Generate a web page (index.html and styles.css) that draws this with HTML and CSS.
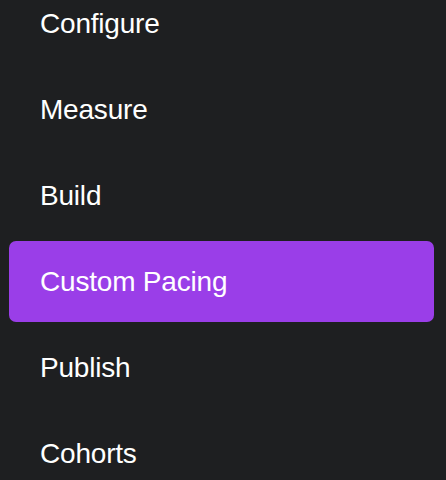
FILE: index.html
```html
<!DOCTYPE html>
<html>
<head>
<meta charset="utf-8">
<link rel="stylesheet" href="styles.css">
</head>
<body>
<nav class="menu">
  <a class="item">Configure</a>
  <a class="item">Measure</a>
  <a class="item">Build</a>
  <a class="item active">Custom Pacing</a>
  <a class="item">Publish</a>
  <a class="item">Cohorts</a>
</nav>
</body>
</html>
```
FILE: styles.css
```css
html, body {
  margin: 0;
  padding: 0;
  background: #1e1f21;
  height: 100%;
  overflow: hidden;
}
.menu {
  display: flex;
  flex-direction: column;
  gap: 5px;
  margin-top: -17px;
  padding: 0 12px 0 9px;
}
.item {
  display: flex;
  align-items: center;
  height: 81px;
  padding-left: 31px;
  border-radius: 7px;
  color: #ffffff;
  font-family: "Liberation Sans", Arial, sans-serif;
  font-size: 28px;
  letter-spacing: -0.2px;
}
.item.active {
  background: #9a3ee8;
}
```
